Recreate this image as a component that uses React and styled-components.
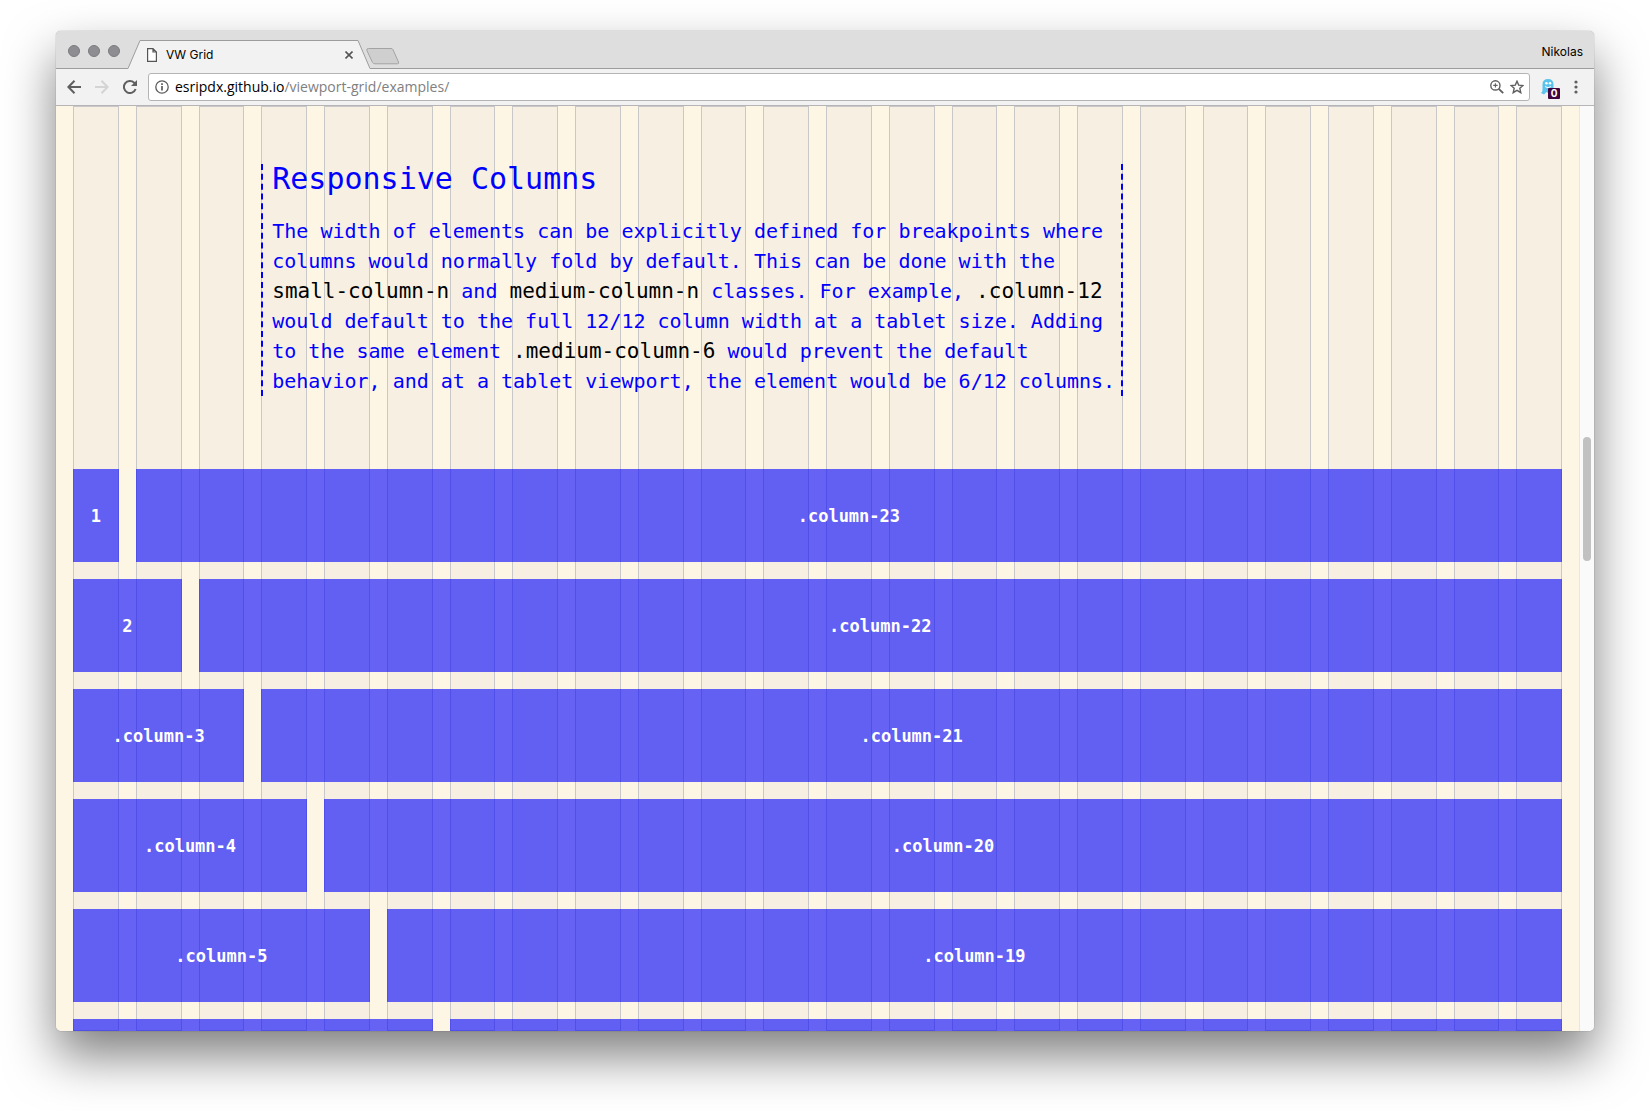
import React from "react";
import styled, { createGlobalStyle } from "styled-components";

const GUTTER = 17;
const UI = `Inter, "Liberation Sans", sans-serif`;
const MONO = `"DejaVu Sans Mono", "Liberation Mono", monospace`;

const GlobalStyle = createGlobalStyle`
  *, *::before, *::after { box-sizing: border-box; }
  body { margin: 0; background: #fff; font-family: ${UI}; overflow: hidden; }
  button { border: 0; padding: 0; background: none; font: inherit; color: inherit; }
  svg { display: block; }
`;

const Desktop = styled.div`
  display: flex;
  height: 100vh;
  padding: 31px 56px 80px;
`;

const Window = styled.div`
  flex: 1;
  min-width: 0;
  display: flex;
  flex-direction: column;
  overflow: hidden;
  border-radius: 5px;
  background: #f2f2f2;
  box-shadow: 0 0 1px rgba(0, 0, 0, 0.6), 0 25px 50px rgba(0, 0, 0, 0.5);
`;

const TitleBar = styled.header`
  display: flex;
  align-items: flex-end;
  flex: none;
  height: 38px;
  padding: 0 11px 0 12px;
  background: linear-gradient(#9c9c9c, #9c9c9c) bottom / 100% 1px no-repeat #dedede;
`;

const Lights = styled.div`
  display: flex;
  gap: 8px;
  align-self: center;
  padding-top: 2px;
  margin-right: 8px;
`;

const Light = styled.button`
  width: 12px;
  height: 12px;
  border-radius: 50%;
  border: 1px solid #7b7a7f;
  background: #8e8d92;
`;

const Tab = styled.div`
  display: flex;
  height: 29px;
  margin-right: -4px;
`;

const TabBody = styled.div`
  display: flex;
  align-items: center;
  width: 216px;
  padding: 0 4px 0 6px;
  background: #f2f2f2;
  border-top: 1px solid #9c9c9c;
  color: #000;
  font-size: 12px;
  line-height: 16px;
`;

const TabTitle = styled.span`
  flex: 1;
  margin-left: 9px;
`;

const NewTab = styled.button`
  align-self: flex-end;
  margin-bottom: 4px;
`;

const User = styled.button`
  align-self: center;
  margin-left: auto;
  padding-top: 3px;
  font-size: 12px;
  line-height: 16px;
  color: #000;
`;

const Toolbar = styled.nav`
  display: flex;
  align-items: center;
  flex: none;
  height: 37px;
  padding: 0 11px 0 9px;
  border-bottom: 1px solid #b6b4b6;
  background: #f2f2f2;
`;

const IconButton = styled.button`
  flex: none;
  display: grid;
  place-items: center;
  width: ${(p) => p.$w}px;
  height: 26px;
  color: ${(p) => (p.$dim ? "#d4d4d4" : "#5f5f5f")};
`;

const AddressBar = styled.div`
  flex: 1;
  display: flex;
  align-items: center;
  height: 28px;
  margin: 0 10px 0 9px;
  padding: 0 2px 0 6px;
  border: 1px solid #b4b4b4;
  border-radius: 3px;
  background: #fff;
`;

const Url = styled.div`
  flex: 1;
  margin-left: 6px;
  font-family: "Open Sans", ${UI};
  font-size: 14px;
  line-height: 20px;
  color: #808080;
  b { font-weight: 400; color: #000; }
`;

const Ghost = styled.button`
  flex: none;
  width: 20px;
  height: 24px;
  margin-right: 9px;
`;

const Viewport = styled.main`
  flex: 1;
  min-height: 0;
  display: flex;
  background: #fef6e4;
`;

const Page = styled.div`
  flex: 1;
  min-width: 0;
  display: grid;
  grid-template: minmax(0, 1fr) / minmax(0, 1fr);
  overflow: hidden;
  padding: 0 ${GUTTER}px;
`;

const Columns = styled.div`
  display: grid;
  grid-template-columns: repeat(24, minmax(0, 1fr));
  column-gap: ${GUTTER}px;
`;

const Guides = styled(Columns)`
  grid-area: 1 / 1;
`;

const Guide = styled.div`
  border: 1px solid #c8c8c8;
  background: #f6efe2;
`;

const Content = styled.div`
  grid-area: 1 / 1;
  display: flex;
  flex-direction: column;
  gap: ${GUTTER}px;
  padding-top: 58px;
  font-family: ${MONO};
`;

const Intro = styled.section`
  grid-column: 4 / span 14;
  margin-bottom: 56px;
  padding: 0 0 0 9px;
  border: 2px dashed #00f;
  border-width: 0 2px;
  color: #00f;
`;

const Heading = styled.h2`
  margin: 0 0 22px;
  font-weight: 400;
  font-size: 30px;
  line-height: 30px;
`;

const Text = styled.p`
  margin: 0;
  font-size: 20px;
  line-height: 30px;
`;

const Code = styled.code`
  font-family: inherit;
  font-size: 21px;
  line-height: 24px;
  color: #000;
`;

const Block = styled.div`
  grid-column: span ${(p) => p.$span};
  display: grid;
  place-items: center;
  height: 93px;
  background: rgba(0, 0, 255, 0.6);
  color: #fff;
  font-size: 17px;
  font-weight: 700;
  line-height: 28px;
`;

const ScrollTrack = styled.div`
  flex: none;
  width: 15px;
  padding: 331px 3px 0 2px;
  border-left: 1px solid #e6e6e2;
  background: #fafafa;
`;

const ScrollThumb = styled.div`
  width: 8px;
  height: 124px;
  margin: auto;
  border-radius: 4px;
  background: #c1c1c1;
`;

const rows = [
  ["1", ".column-23"],
  ["2", ".column-22"],
  [".column-3", ".column-21"],
  [".column-4", ".column-20"],
  [".column-5", ".column-19"],
  ["", ""],
];

export default function App() {
  return (
    <>
      <GlobalStyle />
      <Desktop>
        <Window>
          <TitleBar>
            <Lights>
              <Light aria-label="Close window" />
              <Light aria-label="Minimize window" />
              <Light aria-label="Zoom window" />
            </Lights>
            <Tab>
              <svg width="13" height="29" viewBox="0 0 13 29">
                <path d="M0 29 L0 28.5 L12 .5 H13 V29Z" fill="#f2f2f2" />
                <path d="M0 28.5 L12 .5 H13" fill="none" stroke="#9c9c9c" />
              </svg>
              <TabBody>
                <svg width="10" height="14" viewBox="0 0 10 14" fill="#fff" stroke="#555" strokeWidth="1.2">
                  <path d="M.6 .6 H6 L9.4 4 V13.4 H.6Z M6 .6 V4 H9.4" />
                </svg>
                <TabTitle>VW Grid</TabTitle>
                <button aria-label="Close tab">
                  <svg width="8" height="8" viewBox="0 0 8 8" stroke="#555" strokeWidth="1.6">
                    <path d="M.5 .5 L7.5 7.5 M7.5 .5 L.5 7.5" />
                  </svg>
                </button>
              </TabBody>
              <svg width="13" height="29" viewBox="0 0 13 29">
                <path d="M0 .5 H1 L13 28.5 V29 H0Z" fill="#f2f2f2" />
                <path d="M0 .5 H1 L13 28.5" fill="none" stroke="#9c9c9c" />
              </svg>
            </Tab>
            <NewTab aria-label="New tab">
              <svg width="34" height="17" viewBox="0 0 34 17">
                <path d="M2.5 .5 H25 Q26.5 .5 27 1.7 L32.5 14 Q33.2 15.8 31.5 15.8 H9 Q7.2 15.8 6.5 14.5 L.9 2.5 Q.3 .5 2.5 .5Z" fill="#cfcfcf" stroke="#a3a3a3" />
              </svg>
            </NewTab>
            <User>Nikolas</User>
          </TitleBar>

          <Toolbar>
            <IconButton $w={18} aria-label="Back">
              <svg width="14" height="14" viewBox="0 0 14 14" fill="none" stroke="currentColor" strokeWidth="2">
                <path d="M14 7 H1.5 M7.5 .8 L1.4 7 L7.5 13.2" />
              </svg>
            </IconButton>
            <IconButton $w={38} $dim aria-label="Forward">
              <svg width="14" height="14" viewBox="0 0 14 14" fill="none" stroke="currentColor" strokeWidth="2">
                <path d="M0 7 H12.5 M6.5 .8 L12.6 7 L6.5 13.2" />
              </svg>
            </IconButton>
            <IconButton $w={18} aria-label="Reload">
              <svg width="14" height="14" viewBox="0 0 14 14" fill="none" stroke="currentColor" strokeWidth="2">
                <path d="M12.6 9 A6 6 0 1 1 11.2 2.8 L12.4 4" />
                <path d="M14 0 V6 H8Z" fill="currentColor" stroke="none" />
              </svg>
            </IconButton>
            <AddressBar>
              <svg width="14" height="14" viewBox="0 0 14 14" fill="none" stroke="#5a5a5a">
                <circle cx="7" cy="7" r="6.2" strokeWidth="1.3" />
                <path d="M7 6 V10.5 M7 3.3 V5" strokeWidth="1.7" />
              </svg>
              <Url><b>esripdx.github.io</b>/viewport-grid/examples/</Url>
              <IconButton $w={20} aria-label="Zoom">
                <svg width="14" height="14" viewBox="0 0 14 14" fill="none" stroke="currentColor" strokeWidth="1.4">
                  <circle cx="5.4" cy="5.4" r="4.6" />
                  <path d="M8.8 8.8 L13.2 13.2" strokeWidth="1.9" />
                  <path d="M5.4 3.2 V7.6 M3.2 5.4 H7.6" strokeWidth="1.1" />
                </svg>
              </IconButton>
              <IconButton $w={20} aria-label="Bookmark">
                <svg width="14" height="14" viewBox="0 0 14 14" fill="none" stroke="currentColor" strokeWidth="1.4">
                  <path d="M7 1.2 L8.7 5.1 L13 5.5 L9.8 8.3 L10.8 12.7 L7 10.4 L3.2 12.7 L4.2 8.3 L1 5.5 L5.3 5.1Z" />
                </svg>
              </IconButton>
            </AddressBar>
            <Ghost aria-label="Ghostery, 0 trackers">
              <svg width="20" height="24" viewBox="0 0 20 24">
                <path d="M2.5 15 V9.5 Q2.5 4 8 4 Q13.5 4 13.5 9.5 V18 L11.5 17 L9 18.5 L6.5 17 L4 19.5 L1 18 Q2.5 17 2.5 15Z" fill="#5bc4ec" />
                <circle cx="6.4" cy="8.2" r="1.3" fill="#fff" />
                <circle cx="10" cy="8.2" r="1.3" fill="#fff" />
                <path d="M5 11.5 Q8 14 11 11.5" fill="none" stroke="#fff" />
                <rect x="8" y="13" width="12" height="11" rx="1" fill="#40053f" />
                <text x="14" y="22" textAnchor="middle" fontSize="10" fontWeight="700" fill="#fff">0</text>
              </svg>
            </Ghost>
            <IconButton $w={14} aria-label="Menu">
              <svg width="4" height="14" viewBox="0 0 4 14" fill="currentColor">
                <circle cx="2" cy="2" r="1.6" />
                <circle cx="2" cy="7" r="1.6" />
                <circle cx="2" cy="12" r="1.6" />
              </svg>
            </IconButton>
          </Toolbar>

          <Viewport>
            <Page>
              <Guides aria-hidden="true">
                {Array.from({ length: 24 }, (_, i) => <Guide key={i} />)}
              </Guides>
              <Content>
                <Columns>
                  <Intro>
                    <Heading>Responsive Columns</Heading>
                    <Text>
                      The width of elements can be explicitly defined for breakpoints where columns would
                      normally fold by default. This can be done with the <Code>small-column-n</Code> and{" "}
                      <Code>medium-column-n</Code> classes. For example, <Code>.column-12</Code> would default
                      to the full 12/12 column width at a tablet size. Adding to the same element{" "}
                      <Code>.medium-column-6</Code> would prevent the default behavior, and at a tablet
                      viewport, the element would be 6/12 columns.
                    </Text>
                  </Intro>
                </Columns>
                {rows.map(([left, right], i) => (
                  <Columns key={i}>
                    <Block $span={i + 1}>{left}</Block>
                    <Block $span={23 - i}>{right}</Block>
                  </Columns>
                ))}
              </Content>
            </Page>
            <ScrollTrack>
              <ScrollThumb />
            </ScrollTrack>
          </Viewport>
        </Window>
      </Desktop>
    </>
  );
}
